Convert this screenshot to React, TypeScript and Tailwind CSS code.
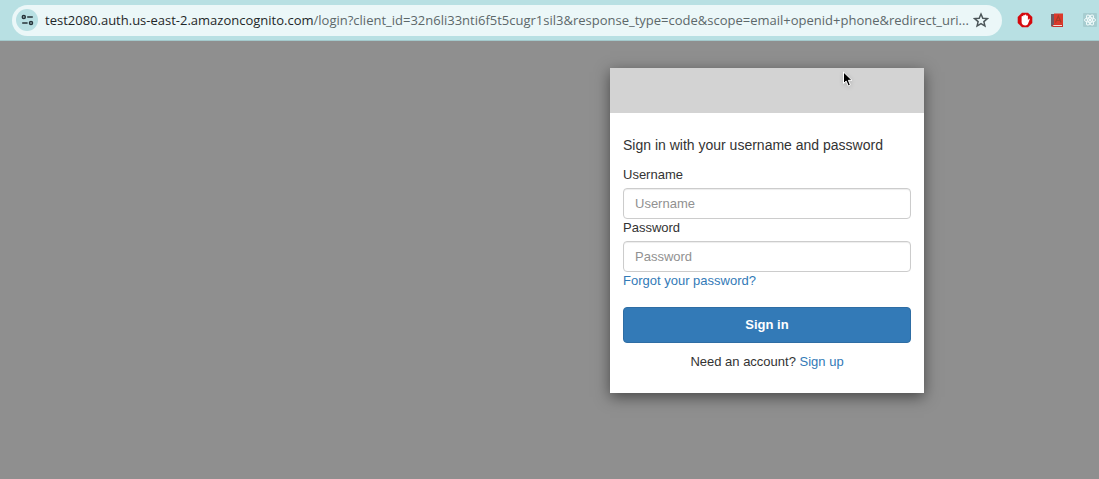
import { useState } from "react";

const SiteSettingsIcon = () => (
  <svg width="13" height="12" viewBox="0 0 13 12" fill="none" stroke="#263238" strokeWidth="1.5">
    <circle cx="2.8" cy="3" r="1.5" />
    <path d="M6.2 3h5.6M1.2 9h5.4" />
    <circle cx="10" cy="9" r="1.5" />
  </svg>
);

const StarIcon = () => (
  <svg width="16" height="16" viewBox="0 0 24 24" fill="none" stroke="#4b5558" strokeWidth="2.2">
    <path d="M12 3l2.700 6.300 6.800.6-5.200 4.500 1.600 6.700L12 17.500l-5.900 3.600 1.600-6.700-5.200-4.500 6.800-.6z" />
  </svg>
);

const BlockerIcon = () => (
  <svg width="16" height="16" viewBox="0 0 16 16">
    <path d="M5 .7h6L15.3 5v6L11 15.3H5L.7 11V5z" fill="#d5090d" />
    <path
      d="M4.600 8.200V4.800a.8.8 0 0 1 1.600 0V3.700a.8.8 0 0 1 1.600 0V3.300a.8.8 0 0 1 1.600 0v.7a.8.8 0 0 1 1.500 0v4.200l.7-1c.5-.7 1.400-.3 1.100.4l-1.700 4.200c-.4 1-1.200 1.600-2.600 1.600C6 13.400 4.600 12.100 4.600 10z"
      fill="#fff"
    />
  </svg>
);

const DictionaryIcon = () => (
  <svg width="14" height="15" viewBox="0 0 14 15">
    <path d="M1 1h3v12.500H1z" fill="#6b5a63" />
    <path d="M4 .5h9V12H4z" fill="#dc3a2b" />
    <path d="M1.500 12.500L4 11.500h9V14H3z" fill="#c9302a" />
    <path d="M3.500 12h8.500v1H3z" fill="#f3ded5" />
    <path d="M5.500 9.500L8.300 3l2.800 6.500M6.500 7.500h3.600" fill="none" stroke="#a83a26" strokeWidth="1.200" />
  </svg>
);

const ReactIcon = () => (
  <svg width="14" height="14" viewBox="0 0 14 14" fill="none">
    <rect width="14" height="14" rx="1" fill="#a7cdd0" />
    <g stroke="#f2fbfb" strokeWidth="1">
      <ellipse cx="7" cy="7" rx="5.600" ry="2.200" />
      <ellipse cx="7" cy="7" rx="5.600" ry="2.200" transform="rotate(60 7 7)" />
      <ellipse cx="7" cy="7" rx="5.600" ry="2.200" transform="rotate(120 7 7)" />
    </g>
    <circle cx="7" cy="7" r="1.200" fill="#f2fbfb" />
  </svg>
);

const Cursor = () => (
  <svg
    className="absolute left-[232px] top-[3px] drop-shadow-sm"
    width="12"
    height="17"
    viewBox="0 0 12 17"
    aria-hidden="true"
  >
    <path
      d="M1.500 1v11.500l2.700-2.400 2 4.800 2.200-.9-2-4.700h3.600z"
      fill="#000"
      stroke="#fff"
      strokeWidth="1"
    />
  </svg>
);

const BrowserBar = () => (
  <header className="flex h-[41px] items-center border-b border-[#a3c9cc] bg-[#b8e0e3] pl-3">
    <div className="flex h-[31px] min-w-0 flex-1 items-center rounded-full bg-[#ebf7f8] pl-1 pr-[13px]">
      <button
        aria-label="View site information"
        className="flex size-[22px] shrink-0 items-center justify-center rounded-full bg-[#b8e0e3]"
      >
        <SiteSettingsIcon />
      </button>
      <div className="ml-[7px] min-w-0 flex-1 whitespace-nowrap font-['Open_Sans',sans-serif] text-[13px] leading-5 text-[#5d686a]">
        <span className="text-[#1f2729]">test2080.auth.us-east-2.amazoncognito.com</span>
        /login?client_id=32n6li33nti6f5t5cugr1sil3&amp;response_type=code&amp;scope=email+openid+phone&amp;redirect_uri...
      </div>
      <button aria-label="Bookmark this tab" className="shrink-0">
        <StarIcon />
      </button>
    </div>
    <div className="flex shrink-0 items-center gap-[17px] pl-[15px] pr-0.5">
      <button aria-label="Ad blocker">
        <BlockerIcon />
      </button>
      <button aria-label="Dictionary">
        <DictionaryIcon />
      </button>
      <button aria-label="React developer tools" className="pl-0.5">
        <ReactIcon />
      </button>
    </div>
  </header>
);

const Field = ({
  id,
  label,
  type,
  value,
  onChange,
}: {
  id: string;
  label: string;
  type: string;
  value: string;
  onChange: (value: string) => void;
}) => (
  <div>
    <label htmlFor={id} className="block pb-1 leading-[18px]">
      {label}
    </label>
    <input
      id={id}
      type={type}
      placeholder={label}
      value={value}
      onChange={(e) => onChange(e.target.value)}
      className="block h-[31px] w-full rounded-[4px] border border-[#ccc] bg-white px-[11px] shadow-[inset_0_1px_1px_rgba(0,0,0,0.075)] placeholder:text-[#919191]"
    />
  </div>
);

const SignInCard = () => {
  const [username, setUsername] = useState("");
  const [password, setPassword] = useState("");

  return (
    <section className="relative w-full max-w-[314px] bg-white shadow-[0_4px_14px_rgba(0,0,0,0.5)]">
      <div className="h-[45px] bg-[#d3d3d3]" />
      <Cursor />
      <form
        className="px-[13px] pb-[22px] pt-[22px] text-[13px] text-[#333]"
        onSubmit={(e) => e.preventDefault()}
      >
        <h1 className="pb-[11px] text-[14px] leading-5">Sign in with your username and password</h1>
        <Field id="username" label="Username" type="text" value={username} onChange={setUsername} />
        <Field id="password" label="Password" type="password" value={password} onChange={setPassword} />
        <a href="#forgot" className="block leading-[18px] text-[#337ab7]">
          Forgot your password?
        </a>
        <button
          type="submit"
          className="mt-[17px] h-9 w-full rounded-[4px] border border-[#2e6da4] bg-[#337ab7] font-bold text-white"
        >
          Sign in
        </button>
        <p className="mt-[10px] text-center leading-[18px]">
          Need an account?{" "}
          <a href="#signup" className="text-[#337ab7]">
            Sign up
          </a>
        </p>
      </form>
    </section>
  );
};

const App = () => (
  <div className="flex min-h-screen flex-col bg-[#8f8f8f] font-['Liberation_Sans',Arial,sans-serif]">
    <BrowserBar />
    <main className="flex flex-1 items-start justify-end pr-[175px] pt-[27px]">
      <SignInCard />
    </main>
  </div>
);

export default App;
